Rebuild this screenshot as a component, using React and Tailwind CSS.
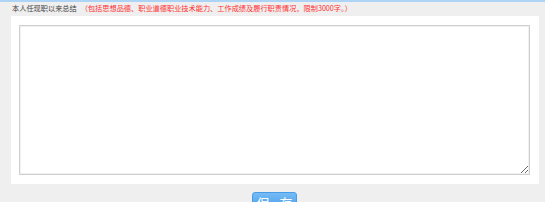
export default function App() {
  return (
    <div
      className="w-[545px] h-[202px] bg-[#efefef] overflow-hidden"
      style={{ fontFamily: '"Noto Sans CJK SC", "Liberation Sans", sans-serif' }}
    >
      {/* top line */}
      <div className="h-[2px] bg-[#add4f4]" />

      {/* label row */}
      <div className="h-[14px] flex items-center pl-[12px] text-[7.2px] leading-none whitespace-nowrap">
        <span className="text-[#444]">本人任现职以来总结</span>
        <span className="ml-[4px] text-[#ff3030]">（包括思想品德、职业道德职业技术能力、工作成绩及履行职责情况，限制3000字。）</span>
      </div>

      {/* panel */}
      <div className="ml-[11px] w-[528px] h-[168px] bg-white pl-[8px] pt-[9px]">
        <textarea className="block w-[511px] h-[150px] border border-[#cfcfcf] shadow-[inset_0_0_0_1px_#f0f0f0] bg-white resize outline-none" />
      </div>

      {/* button */}
      <div className="flex justify-center pt-[8px] pl-[4px]">
        <button className="w-[45px] h-[24px] rounded-[3px] bg-gradient-to-b from-[#74bcf6] to-[#3a90e2] border border-[#4a9be6] text-white text-[13px] leading-none flex items-start justify-center gap-[10px] pt-[3px] whitespace-nowrap">
          <span>保</span>
          <span>存</span>
        </button>
      </div>
    </div>
  );
}
